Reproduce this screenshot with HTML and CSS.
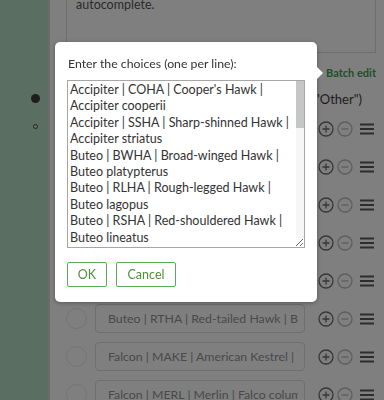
FILE: index.html
```html
<!DOCTYPE html>
<html lang="en">
<head>
  <meta charset="UTF-8">
  <title>Choices - Batch edit</title>
  <link rel="stylesheet" href="styles.css">
</head>
<body>
  <div class="app">
    <aside class="steps">
      <span class="dot dot-on"></span>
      <span class="dot dot-off"></span>
    </aside>

    <main class="panel">
      <div class="hint">Pipe-delimited values enable type-ahead<br>autocomplete.</div>
      <div class="batch"><a href="#">Batch edit</a></div>
      <div class="other">Allow an other option ("Other")</div>

      <ul class="choices">
        <li class="choice">
          <span class="radio"></span>
          <input class="choice-input" value="Accipiter | COHA | Cooper's Hawk | Accipiter cooperii">
          <span class="ctl">
            <svg class="ic ic-add" viewBox="0 0 16 16"><circle cx="8" cy="8" r="7"/><path d="M8 4.5v7M4.5 8h7"/></svg>
            <svg class="ic ic-del" viewBox="0 0 16 16"><circle cx="8" cy="8" r="7"/><path d="M4.5 8h7"/></svg>
            <svg class="ic ic-drag" viewBox="0 0 16 16"><path d="M1 3.5h14M1 8h14M1 12.5h14"/></svg>
          </span>
        </li>
        <li class="choice">
          <span class="radio"></span>
          <input class="choice-input" value="Accipiter | SSHA | Sharp-shinned Hawk | Accipiter striatus">
          <span class="ctl">
            <svg class="ic ic-add" viewBox="0 0 16 16"><circle cx="8" cy="8" r="7"/><path d="M8 4.5v7M4.5 8h7"/></svg>
            <svg class="ic ic-del" viewBox="0 0 16 16"><circle cx="8" cy="8" r="7"/><path d="M4.5 8h7"/></svg>
            <svg class="ic ic-drag" viewBox="0 0 16 16"><path d="M1 3.5h14M1 8h14M1 12.5h14"/></svg>
          </span>
        </li>
        <li class="choice">
          <span class="radio"></span>
          <input class="choice-input" value="Buteo | BWHA | Broad-winged Hawk | Buteo platypterus">
          <span class="ctl">
            <svg class="ic ic-add" viewBox="0 0 16 16"><circle cx="8" cy="8" r="7"/><path d="M8 4.5v7M4.5 8h7"/></svg>
            <svg class="ic ic-del" viewBox="0 0 16 16"><circle cx="8" cy="8" r="7"/><path d="M4.5 8h7"/></svg>
            <svg class="ic ic-drag" viewBox="0 0 16 16"><path d="M1 3.5h14M1 8h14M1 12.5h14"/></svg>
          </span>
        </li>
        <li class="choice">
          <span class="radio"></span>
          <input class="choice-input" value="Buteo | RLHA | Rough-legged Hawk | Buteo lagopus">
          <span class="ctl">
            <svg class="ic ic-add" viewBox="0 0 16 16"><circle cx="8" cy="8" r="7"/><path d="M8 4.5v7M4.5 8h7"/></svg>
            <svg class="ic ic-del" viewBox="0 0 16 16"><circle cx="8" cy="8" r="7"/><path d="M4.5 8h7"/></svg>
            <svg class="ic ic-drag" viewBox="0 0 16 16"><path d="M1 3.5h14M1 8h14M1 12.5h14"/></svg>
          </span>
        </li>
        <li class="choice">
          <span class="radio"></span>
          <input class="choice-input" value="Buteo | RSHA | Red-shouldered Hawk | Buteo lineatus">
          <span class="ctl">
            <svg class="ic ic-add" viewBox="0 0 16 16"><circle cx="8" cy="8" r="7"/><path d="M8 4.5v7M4.5 8h7"/></svg>
            <svg class="ic ic-del" viewBox="0 0 16 16"><circle cx="8" cy="8" r="7"/><path d="M4.5 8h7"/></svg>
            <svg class="ic ic-drag" viewBox="0 0 16 16"><path d="M1 3.5h14M1 8h14M1 12.5h14"/></svg>
          </span>
        </li>
        <li class="choice">
          <span class="radio"></span>
          <input class="choice-input" value="Buteo | RTHA | Red-tailed Hawk | Buteo jamaicensis">
          <span class="ctl">
            <svg class="ic ic-add" viewBox="0 0 16 16"><circle cx="8" cy="8" r="7"/><path d="M8 4.5v7M4.5 8h7"/></svg>
            <svg class="ic ic-del" viewBox="0 0 16 16"><circle cx="8" cy="8" r="7"/><path d="M4.5 8h7"/></svg>
            <svg class="ic ic-drag" viewBox="0 0 16 16"><path d="M1 3.5h14M1 8h14M1 12.5h14"/></svg>
          </span>
        </li>
        <li class="choice">
          <span class="radio"></span>
          <input class="choice-input" value="Falcon | MAKE | American Kestrel | Falco sparverius">
          <span class="ctl">
            <svg class="ic ic-add" viewBox="0 0 16 16"><circle cx="8" cy="8" r="7"/><path d="M8 4.5v7M4.5 8h7"/></svg>
            <svg class="ic ic-del" viewBox="0 0 16 16"><circle cx="8" cy="8" r="7"/><path d="M4.5 8h7"/></svg>
            <svg class="ic ic-drag" viewBox="0 0 16 16"><path d="M1 3.5h14M1 8h14M1 12.5h14"/></svg>
          </span>
        </li>
        <li class="choice">
          <span class="radio"></span>
          <input class="choice-input" value="Falcon | MERL | Merlin | Falco columbarius">
          <span class="ctl">
            <svg class="ic ic-add" viewBox="0 0 16 16"><circle cx="8" cy="8" r="7"/><path d="M8 4.5v7M4.5 8h7"/></svg>
            <svg class="ic ic-del" viewBox="0 0 16 16"><circle cx="8" cy="8" r="7"/><path d="M4.5 8h7"/></svg>
            <svg class="ic ic-drag" viewBox="0 0 16 16"><path d="M1 3.5h14M1 8h14M1 12.5h14"/></svg>
          </span>
        </li>
      </ul>
    </main>
  </div>

  <!-- modal -->
  <div class="overlay"></div>
  <div class="popup">
    <p class="popup-label">Enter the choices (one per line):</p>
    <div class="popup-field">
      <textarea class="popup-text" spellcheck="false">
Accipiter | COHA | Cooper's Hawk | Accipiter cooperii
Accipiter | SSHA | Sharp-shinned Hawk | Accipiter striatus
Buteo | BWHA | Broad-winged Hawk | Buteo platypterus
Buteo | RLHA | Rough-legged Hawk | Buteo lagopus
Buteo | RSHA | Red-shouldered Hawk | Buteo lineatus
Buteo | RTHA | Red-tailed Hawk | Buteo jamaicensis
Falcon | MAKE | American Kestrel | Falco sparverius
Falcon | MERL | Merlin | Falco columbarius
Falcon | PEFA | Peregrine Falcon | Falco peregrinus
Eagle | BAEA | Bald Eagle | Haliaeetus leucocephalus
Eagle | GOEA | Golden Eagle | Aquila chrysaetos
Harrier | NOHA | Northern Harrier | Circus hudsonius
Osprey | OSPR | Osprey | Pandion haliaetus
Vulture | TUVU | Turkey Vulture | Cathartes aura
Vulture | BLVU | Black Vulture | Coragyps atratus
Accipiter | NOGO | Northern Goshawk | Accipiter gentilis
Unknown | UNRA | Unidentified Raptor | Accipitridae</textarea>
      <span class="scroll-track"><span class="scroll-thumb"></span></span>
    </div>
    <div class="popup-buttons">
      <button class="btn btn-ok">OK</button>
      <button class="btn btn-cancel">Cancel</button>
    </div>
  </div>
</body>
</html>
```

FILE: styles.css
```css
body {
  margin: 0;
  font-family: 'Lato', 'Open Sans', sans-serif;
  overflow: hidden;
  height: 400px;
}

.app {
  display: flex;
  height: 400px;
}

/* left step strip */
.steps {
  width: 50px;
  flex-shrink: 0;
  background-color: #b4dcc2;
  border-right: 2px solid #d6d6d6;
  display: flex;
  flex-direction: column;
  align-items: flex-start;
  padding: 94px 0 0 31px;
  box-sizing: border-box;
}

.dot {
  display: block;
  border-radius: 50%;
}

.dot-on {
  width: 9px;
  height: 9px;
  background-color: #3a3a3a;
}

.dot-off {
  width: 3px;
  height: 3px;
  margin: 21px 0 0 2px;
  border: 1px solid #444;
  background-color: #ddd;
}

/* settings panel */
.panel {
  flex: 1;
  min-width: 0;
  background-color: #ffffff;
  padding: 0 8px 0 16px;
  color: #444;
}

.hint {
  box-sizing: border-box;
  height: 75px;
  margin-top: -22px;
  padding: 2px 9px 0;
  border: 1px solid #dcdcdc;
  font-size: 12.5px;
  line-height: 16px;
  color: #555;
  overflow: hidden;
}

.batch {
  margin-top: 11px;
  text-align: right;
  font-size: 11px;
  line-height: 18px;
  font-weight: 700;
}

.batch a {
  color: #40a050;
  text-decoration: none;
}

.other {
  margin-top: 8px;
  padding-right: 14px;
  text-align: right;
  font-size: 13px;
  line-height: 18px;
  color: #3c3c3c;
  white-space: nowrap;
}

.choices {
  list-style: none;
  margin: 6px 0 0;
  padding: 0;
  display: flex;
  flex-direction: column;
  gap: 9px;
}

.choice {
  display: flex;
  align-items: center;
  height: 29px;
}

.radio {
  width: 19px;
  height: 19px;
  border: 1px solid #e6e6e6;
  border-radius: 50%;
  margin-right: 8px;
  flex-shrink: 0;
}

.choice-input {
  box-sizing: border-box;
  width: 210px;
  height: 29px;
  padding: 0 6px 0 12px;
  border: 1px solid #dedede;
  border-radius: 4px;
  font-family: inherit;
  font-size: 12.3px;
  color: #929292;
  background-color: #ffffff;
}

.ctl {
  display: flex;
  gap: 3px;
  margin-left: 13px;
}

.ic {
  width: 16px;
  height: 16px;
  fill: none;
  stroke-width: 1.3;
}

.ic-add { stroke: #6e6e6e; }
.ic-del { stroke: #bcbcbc; }
.ic-drag {
  stroke: #5a5a5a;
  stroke-width: 1.8;
  margin-left: 3px;
}

/* modal */
.overlay {
  position: fixed;
  inset: 0;
  background-color: rgba(0, 0, 0, 0.5);
}

.popup {
  position: absolute;
  left: 55px;
  top: 42px;
  width: 262px;
  box-sizing: border-box;
  padding: 14px 12px 15px 12px;
  background-color: #ffffff;
  border-radius: 5px;
  box-shadow: 0 1px 4px rgba(0, 0, 0, 0.3);
}

.popup::after {
  content: '';
  position: absolute;
  right: -6px;
  top: 25px;
  border-left: 6px solid #ffffff;
  border-top: 6px solid transparent;
  border-bottom: 6px solid transparent;
}

.popup-label {
  margin: 0 0 8px 1px;
  font-size: 12.3px;
  line-height: 16px;
  color: #333;
}

.popup-field {
  position: relative;
}

.popup-text {
  display: block;
  box-sizing: border-box;
  width: 238px;
  height: 168px;
  margin: 0;
  padding: 1px 10px 1px 2px;
  border: 1px solid #a6a6a6;
  font-family: inherit;
  font-size: 12.5px;
  line-height: 16.4px;
  color: #333;
  resize: vertical;
  outline: none;
}

.scroll-track {
  position: absolute;
  top: 1px;
  right: 1px;
  bottom: 10px;
  width: 8px;
  background-color: #f6f6f6;
}

.scroll-thumb {
  display: block;
  height: 47px;
  background-color: #c6c6c6;
}

.popup-buttons {
  display: flex;
  gap: 9px;
  margin-top: 14px;
}

.btn {
  height: 25px;
  border: 1px solid #5aac5a;
  border-radius: 2px;
  background-color: #ffffff;
  color: #4f8f3c;
  font-family: inherit;
  font-size: 12.5px;
  padding: 0;
  cursor: pointer;
}

.btn-ok { width: 40px; }
.btn-cancel { width: 60px; }
```
